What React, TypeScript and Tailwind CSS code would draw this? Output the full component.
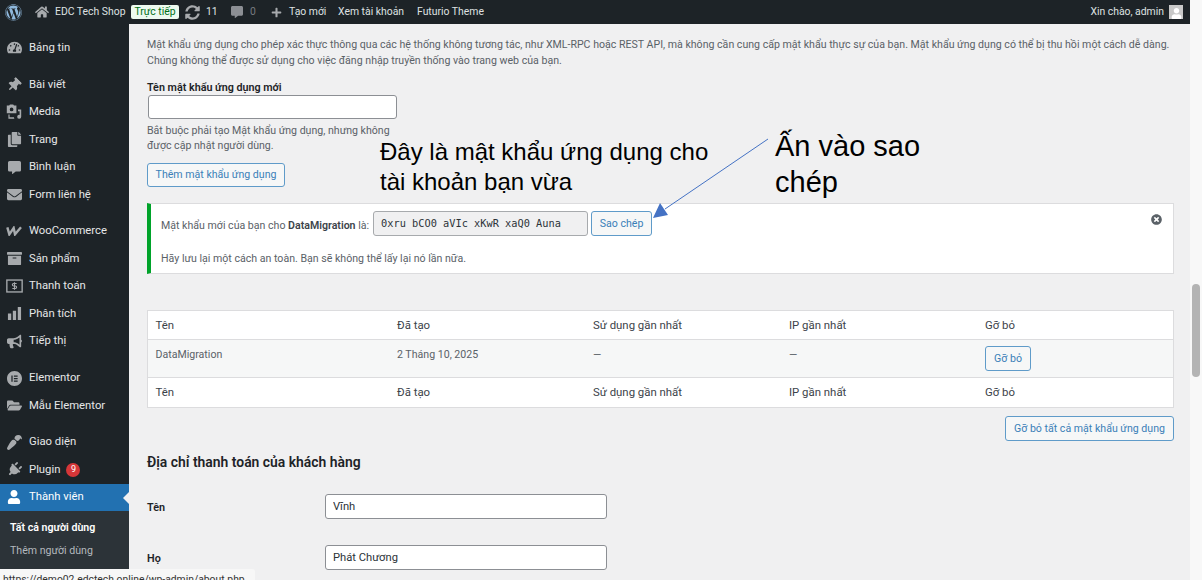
import { ReactNode } from "react";
import {
  FaArchive,
  FaBullhorn,
  FaCommentAlt,
  FaCopy,
  FaEnvelope,
  FaFolderOpen,
  FaHome,
  FaPaintBrush,
  FaPlug,
  FaPlus,
  FaSyncAlt,
  FaTachometerAlt,
  FaThumbtack,
  FaTimesCircle,
  FaUser,
  FaWordpress,
} from "react-icons/fa";
import { SiElementor } from "react-icons/si";

const WooIcon = () => (
  <svg viewBox="0 0 24 15" className="h-[10px] w-[16px]" fill="none" stroke="currentColor" strokeWidth="3.6">
    <path d="M2 2 L5 12.5 L11.5 3 L13.5 12.5 L22.5 2" />
  </svg>
);

const MediaIcon = () => (
  <svg viewBox="0 0 20 20" className="h-[16px] w-[16px]" fill="currentColor">
    <path d="M1 2h3l1-1.5h4L10 2h3v9.5H1zm6 2.5a2.3 2.3 0 1 0 0 4.6 2.3 2.3 0 0 0 0-4.6zM15 7h4v9a2.5 2.5 0 1 1-2-2.4V9h-2zM3 13h1.500v3.500h5.500a3 3 0 0 0 .5 2H3z" />
  </svg>
);

const PayIcon = () => (
  <svg viewBox="0 0 20 16" className="h-[14px] w-[17px]" fill="none" stroke="currentColor" strokeWidth="1.6">
    <rect x="1" y="1" width="18" height="14" />
    <path d="M12.500 5H9a1.500 1.500 0 0 0 0 3h2a1.500 1.500 0 0 1 0 3H7.500M10 3.500v9" strokeWidth="1.300" />
  </svg>
);

const BarsIcon = () => (
  <svg viewBox="0 0 16 16" className="h-[15px] w-[15px]" fill="currentColor">
    <path d="M1 8h3.500v7H1zM6.200 5h3.500v10H6.200zM11.500 1H15v14h-3.500z" />
  </svg>
);

type MenuItem = { label: string; icon: ReactNode; badge?: string; active?: boolean };

const groups: MenuItem[][] = [
  [{ label: "Bảng tin", icon: <FaTachometerAlt size={15} /> }],
  [
    { label: "Bài viết", icon: <FaThumbtack size={14} className="rotate-45" /> },
    { label: "Media", icon: <MediaIcon /> },
    { label: "Trang", icon: <FaCopy size={15} /> },
    { label: "Bình luận", icon: <FaCommentAlt size={13} /> },
    { label: "Form liên hệ", icon: <FaEnvelope size={15} /> },
  ],
  [
    { label: "WooCommerce", icon: <WooIcon /> },
    { label: "Sản phẩm", icon: <FaArchive size={15} /> },
    { label: "Thanh toán", icon: <PayIcon /> },
    { label: "Phân tích", icon: <BarsIcon /> },
    { label: "Tiếp thị", icon: <FaBullhorn size={15} /> },
  ],
  [
    { label: "Elementor", icon: <SiElementor size={15} /> },
    { label: "Mẫu Elementor", icon: <FaFolderOpen size={15} /> },
  ],
  [
    { label: "Giao diện", icon: <FaPaintBrush size={15} className="rotate-180" /> },
    { label: "Plugin", icon: <FaPlug size={15} className="rotate-45" />, badge: "9" },
    { label: "Thành viên", icon: <FaUser size={14} />, active: true },
  ],
];

const TopBar = () => (
  <header className="flex h-[24px] shrink-0 items-center bg-[#1d2327] text-[10.4px] whitespace-nowrap text-[#dfe1e2]">
    <FaWordpress size={17} className="ml-[5px] text-[#8fb8dc]" />
    <FaHome size={14} className="ml-[13px] text-[#a7aaad]" />
    <span className="ml-[6px] w-[70px]">EDC Tech Shop</span>
    <span className="ml-[6px] w-[48px] rounded-[2px] bg-[#edfaef] text-center leading-[14px] text-[#007017]">Trực tiếp</span>
    <FaSyncAlt size={15} className="ml-[6px] text-[#a7aaad]" />
    <span className="ml-[6px] w-[10px]">11</span>
    <FaCommentAlt size={12} className="ml-[15px] text-[#8c8f94]" />
    <span className="ml-[7px] w-[5px] text-[#777b80]">0</span>
    <FaPlus size={11} className="ml-[16px] text-[#a7aaad]" />
    <span className="ml-[7px] w-[37px]">Tạo mới</span>
    <span className="ml-[12px] w-[67px]">Xem tài khoản</span>
    <span className="ml-[12px]">Futurio Theme</span>
    <span className="ml-auto">Xin chào, admin</span>
    <span className="mr-[7px] ml-[5px] flex h-[14px] w-[14px] items-end justify-center overflow-hidden bg-[#c8c8c8] text-white">
      <FaUser size={11} />
    </span>
  </header>
);

const Sidebar = () => (
  <aside className="flex w-[129px] shrink-0 flex-col bg-[#1d2327] pt-[10px] text-[11.3px] text-[#e6e7e8]">
    <div className="flex flex-col gap-[9.25px]">
      {groups.map((group, i) => (
        <ul key={i}>
          {group.map((item) => (
            <li
              key={item.label}
              className={`relative flex h-[27.5px] items-center ${item.active ? "bg-[#2271b1] text-white" : ""}`}
            >
              <span className={`flex w-[29px] justify-center pr-[1px] ${item.active ? "text-white" : "text-[#a7aaad]"}`}>
                {item.icon}
              </span>
              <span className="pt-[1px]">{item.label}</span>
              {item.badge && (
                <span className="ml-[6px] flex h-[14px] w-[14px] items-center justify-center rounded-full bg-[#d63638] text-[9px] text-white">
                  {item.badge}
                </span>
              )}
              {item.active && (
                <span className="absolute top-[8px] right-0 h-0 w-0 border-y-[6px] border-r-[6px] border-y-transparent border-r-[#f0f0f1]" />
              )}
            </li>
          ))}
        </ul>
      ))}
    </div>
    <ul className="flex-1 bg-[#2c3338] pt-[5px] pl-[10px] text-[10.6px] text-[#b4b9be]">
      <li className="flex h-[23px] items-center font-semibold text-white">Tất cả người dùng</li>
      <li className="flex h-[23px] items-center">Thêm người dùng</li>
    </ul>
  </aside>
);

const OutlineButton = ({ children, className = "" }: { children: ReactNode; className?: string }) => (
  <button className={`rounded-[3px] border border-[#5f9bc9] bg-[#f6f7f7] text-[10.6px] whitespace-nowrap text-[#3a80b8] ${className}`}>
    {children}
  </button>
);

const columns = "grid grid-cols-[241.5px_196px_196px_196px_1fr] items-center pl-[7.5px]";

const TableHeadRow = ({ className = "" }: { className?: string }) => (
  <div className={`${columns} pt-[1px] text-[11.4px] text-[#3c434a] ${className}`}>
    <span>Tên</span>
    <span>Đã tạo</span>
    <span>Sử dụng gần nhất</span>
    <span>IP gần nhất</span>
    <span>Gỡ bỏ</span>
  </div>
);

const PasswordNotice = () => (
  <div className="relative mt-[16px] h-[71px] border border-l-4 border-[#dcdcde] border-l-[#00a32a] bg-white pl-[10px] text-[10.6px] text-[#5a6167]">
    <div className="mt-[7px] flex h-[25px] items-center">
      <span className="pt-[5px]">
        Mật khẩu mới của bạn cho <b className="font-semibold text-[#3c434a]">DataMigration</b> là:
      </span>
      <code className="ml-[4px] flex h-[25px] w-[215px] items-center rounded-[3px] border border-[#a7aaad] bg-[#f0f0f1] pl-[7px] font-['DejaVu_Sans_Mono',monospace] text-[10.3px] text-[#2c3338]">
        0xru bCO0 aVIc xKwR xaQ0 Auna
      </code>
      <OutlineButton className="ml-[3px] h-[25px] w-[61px]">Sao chép</OutlineButton>
    </div>
    <p className="mt-[15px] leading-[16px]">Hãy lưu lại một cách an toàn. Bạn sẽ không thể lấy lại nó lần nữa.</p>
    <FaTimesCircle size={11} className="absolute top-[10px] right-[11px] text-[#5a6167]" />
  </div>
);

const Field = ({ label, value }: { label: string; value: string }) => (
  <div className="flex h-[25px] items-center">
    <label className="w-[178px] pt-[3px] text-[10.8px] font-semibold text-[#1d2327]">{label}</label>
    <input
      readOnly
      value={value}
      className="h-[25px] w-[282px] rounded-[3px] border border-[#8c8f94] bg-white px-[7px] text-[11.2px] text-[#2c3338]"
    />
  </div>
);

const Main = () => (
  <main className="relative min-w-0 flex-1 bg-[#f0f0f1] pt-[13px] pr-[16px] pl-[18px] text-[10.6px] text-[#5a6167]">
    <p className="leading-[16px] whitespace-nowrap">
      Mật khẩu ứng dụng cho phép xác thực thông qua các hệ thống không tương tác, như XML-RPC hoặc REST API, mà không cần
      cung cấp mật khẩu thực sự của bạn. Mật khẩu ứng dụng có thể bị thu hồi một cách dễ dàng.
      <br />
      Chúng không thể được sử dụng cho việc đăng nhập truyền thống vào trang web của bạn.
    </p>
    <label className="mt-[11px] block text-[10.75px] leading-[15px] font-semibold text-[#1d2327]">Tên mật khẩu ứng dụng mới</label>
    <input className="ml-px block h-[24px] w-[249px] rounded-[3px] border border-[#8c8f94] bg-white" />
    <p className="mt-[3.5px] leading-[15px]">
      Bắt buộc phải tạo Mật khẩu ứng dụng, nhưng không
      <br />
      được cập nhật người dùng.
    </p>
    <OutlineButton className="mt-[10.5px] block h-[24px] w-[138px]">Thêm mật khẩu ứng dụng</OutlineButton>

    <PasswordNotice />

    <div className="mt-[36px] border border-[#dcdcde] bg-white">
      <TableHeadRow className="h-[29px] border-b border-[#dcdcde]" />
      <div className={`${columns} h-[38px] border-b border-[#dcdcde] bg-[#f6f7f7] text-[10.6px] text-[#5a6167]`}>
        <span className="pb-[7px]">DataMigration</span>
        <span className="pb-[7px]">2 Tháng 10, 2025</span>
        <span className="pb-[7px]">—</span>
        <span className="pb-[7px]">—</span>
        <OutlineButton className="h-[25px] w-[46px]">Gỡ bỏ</OutlineButton>
      </div>
      <TableHeadRow className="h-[29px]" />
    </div>
    <div className="mt-[8px] flex justify-end">
      <OutlineButton className="h-[25px] w-[169px]">Gỡ bỏ tất cả mật khẩu ứng dụng</OutlineButton>
    </div>

    <h2 className="mt-[12px] text-[13.9px] leading-[18px] font-semibold text-[#1d2327]">Địa chỉ thanh toán của khách hàng</h2>
    <div className="mt-[23px] flex flex-col gap-[26px]">
      <Field label="Tên" value="Vĩnh" />
      <Field label="Họ" value="Phát Chương" />
    </div>
  </main>
);

const Annotations = () => (
  <>
    <p className="absolute top-[137px] left-[380px] font-['Liberation_Sans',sans-serif] text-[24px] leading-[30px] text-black">
      Đây là mật khẩu ứng dụng cho
      <br />
      tài khoản bạn vừa
    </p>
    <p className="absolute top-[128px] left-[775px] font-['Liberation_Sans',sans-serif] text-[29px] leading-[36px] text-black">
      Ấn vào sao
      <br />
      chép
    </p>
    <svg className="absolute top-[130px] left-[645px] h-[90px] w-[130px]" viewBox="0 0 130 90" fill="none">
      <path d="M123 9 L20 79" stroke="#4472c4" strokeWidth="1" />
      <path d="M8 88 L15 73 L23 85 Z" fill="#4472c4" />
    </svg>
  </>
);

export default function App() {
  return (
    <div className="relative flex h-[580px] w-[1202px] overflow-hidden bg-[#f0f0f1] font-['Roboto',sans-serif]">
      <div className="flex min-w-0 flex-1 flex-col">
        <TopBar />
        <div className="flex min-h-0 flex-1">
          <Sidebar />
          <Main />
        </div>
      </div>
      <div className="w-[12px] shrink-0 bg-[#f8f8f8] pt-[284px] pl-[2px]">
        <div className="h-[93px] w-[8px] rounded-full bg-[#b4b4b4]" />
      </div>
      <Annotations />
      <div className="absolute bottom-0 left-0 h-[11px] w-[255px] overflow-hidden rounded-tr-[3px] bg-[#f7f7f7] pt-[4px] pl-[3px] text-[10.35px] leading-[14px] whitespace-nowrap text-[#333]">
        https://demo02.edctech.online/wp-admin/about.php
      </div>
    </div>
  );
}
